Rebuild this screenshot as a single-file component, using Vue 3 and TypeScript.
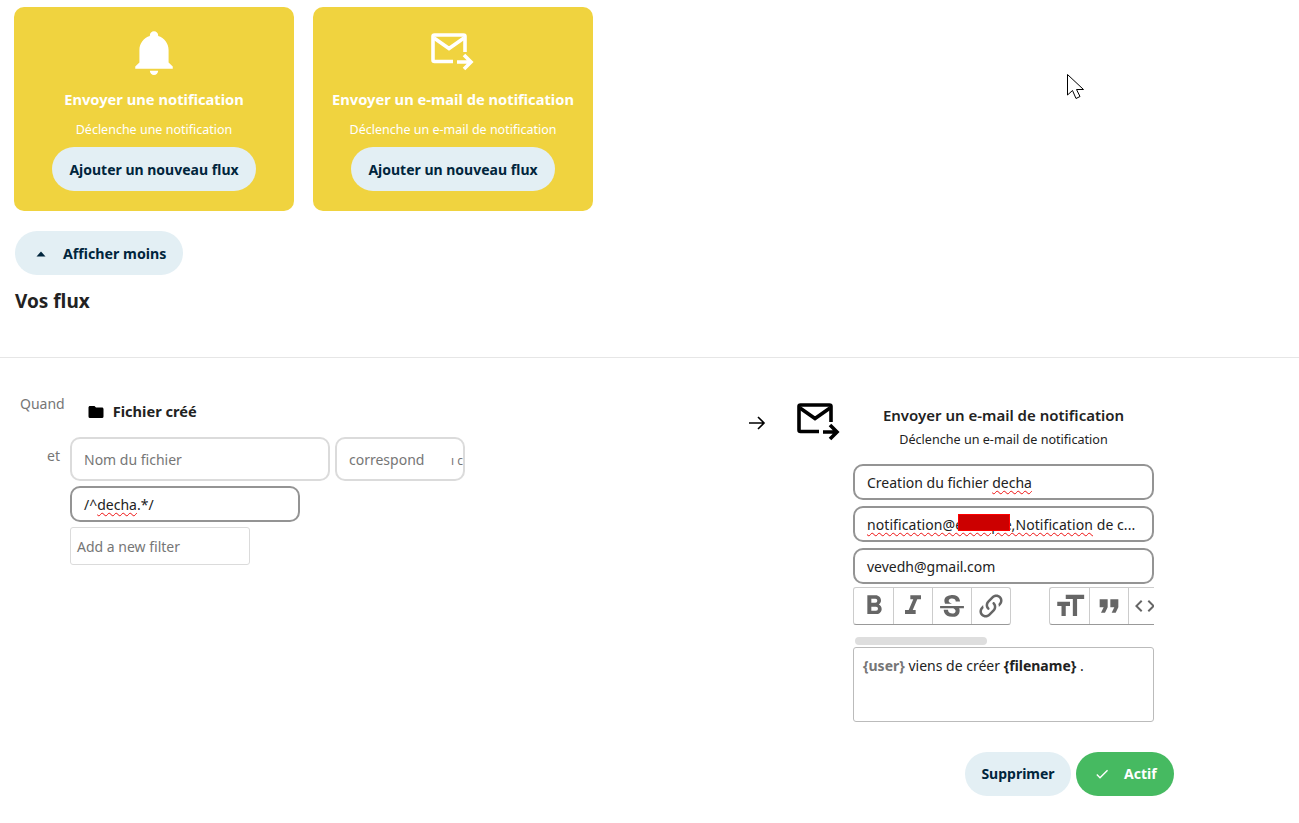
<script setup lang="ts">
interface Op { title: string; desc: string; kind: 'bell' | 'mail' }
interface Tool { d: string; size: number; shift?: number }
const ops: Op[] = [
  { title: 'Envoyer une notification', desc: 'Déclenche une notification', kind: 'bell' },
  { title: 'Envoyer un e-mail de notification', desc: 'Déclenche un e-mail de notification', kind: 'mail' }
]
const bell = 'M21,19V20H3V19L5,17V11C5,7.9 7.03,5.17 10,4.29C10,4.19 10,4.1 10,4A2,2 0 0,1 12,2A2,2 0 0,1 14,4C14,4.1 14,4.19 14,4.29C16.97,5.17 19,7.9 19,11V17L21,19M14,21A2,2 0 0,1 12,23A2,2 0 0,1 10,21'
const tools1: Tool[] = [
  { d: 'M13.5,15.5H10V12.5H13.5A1.5,1.5 0 0,1 15,14A1.5,1.5 0 0,1 13.5,15.5M10,6.5H13A1.5,1.5 0 0,1 14.5,8A1.5,1.5 0 0,1 13,9.5H10M15.6,10.79C16.57,10.11 17.25,9 17.25,8C17.25,5.74 15.5,4 13.25,4H7V18H14.04C16.14,18 17.75,16.3 17.75,14.21C17.75,12.69 16.89,11.39 15.6,10.79Z', size: 32 },
  { d: 'M10,4V7H12.21L8.79,15H6V18H14V15H11.79L15.21,7H18V4H10Z', size: 32 },
  { d: 'M23,12V14H18.61C19.61,16.14 19.56,22 12.38,22C4.05,22.05 4.37,15.5 4.37,15.5L8.34,15.55C8.37,18.92 11.5,18.92 12.12,18.88C12.76,18.83 15.15,18.84 15.34,16.5C15.42,15.41 14.32,14.58 13.12,14H1V12H23M19.41,7.89L15.43,7.86C15.43,7.86 15.6,5.09 12.15,5.08C8.7,5.06 9,7.28 9,7.56C9.04,7.84 9.34,9.22 12,9.88H5.71C5.71,9.88 2.22,3 10.74,2C19.45,1 19.41,7.89 19.41,7.89Z', size: 26 },
  { d: 'M10.59,13.41C11,13.8 11,14.44 10.59,14.83C10.2,15.22 9.56,15.22 9.17,14.83C7.22,12.88 7.22,9.71 9.17,7.76V7.76L12.71,4.22C14.66,2.27 17.83,2.27 19.78,4.22C21.73,6.17 21.73,9.34 19.78,11.29L18.29,12.78C18.3,11.96 18.17,11.14 17.89,10.36L18.36,9.88C19.54,8.71 19.54,6.81 18.36,5.64C17.19,4.46 15.29,4.46 14.12,5.64L10.59,9.17C9.41,10.34 9.41,12.24 10.59,13.41M13.41,9.17C13.8,8.78 14.44,8.78 14.83,9.17C16.78,11.12 16.78,14.29 14.83,16.24V16.24L11.29,19.78C9.34,21.73 6.17,21.73 4.22,19.78C2.27,17.83 2.27,14.66 4.22,12.71L5.71,11.22C5.7,12.04 5.83,12.86 6.11,13.65L5.64,14.12C4.46,15.29 4.46,17.19 5.64,18.36C6.81,19.54 8.71,19.54 9.88,18.36L13.41,14.83C14.59,13.66 14.59,11.76 13.41,10.59C13,10.2 13,9.56 13.41,9.17Z', size: 30 }
]
const tools2: Tool[] = [
  { d: 'M3,12H6V19H9V12H12V9H3M9,4V7H14V19H17V7H22V4H9Z', size: 34 },
  { d: 'M14,17H17L19,13V7H13V13H16M6,17H9L11,13V7H5V13H8L6,17Z', size: 32 },
  { d: 'M14.6,16.6L19.2,12L14.6,7.4L16,6L22,12L16,18L14.6,16.6M9.4,16.6L4.8,12L9.4,7.4L8,6L2,12L8,18L9.4,16.6Z', size: 24, shift: -6 }
]
</script>

<template>
  <div class="page">
    <section class="cards">
      <article v-for="op in ops" :key="op.title" class="card">
        <svg v-if="op.kind === 'bell'" class="bell" viewBox="0 0 24 24"><path :d="bell" fill="#fff" /></svg>
        <svg v-else class="mail-card" viewBox="0 0 44 40">
          <g fill="none" stroke="#fff" stroke-width="3.6">
            <path d="M22 28.5 H3.5 Q2 28.5 2 27 V3.5 Q2 2 3.5 2 H32.5 Q34 2 34 3.5 V19" />
            <path d="M3 5 L18 15.5 L33 5" />
            <path d="M26 29 H39 M33 22 L40 29 L33 36" />
          </g>
        </svg>
        <h3 class="card-title">{{ op.title }}</h3>
        <p class="card-desc">{{ op.desc }}</p>
        <button class="pill">Ajouter un nouveau flux</button>
      </article>
    </section>

    <button class="pill less">
      <svg class="caret" viewBox="0 0 10 6"><path d="M5 0.5 L9.5 5.5 H0.5 Z" fill="#00253c" /></svg>
      Afficher moins
    </button>
    <h2 class="heading">Vos flux</h2>
    <hr class="rule" />

    <section class="flow">
      <div class="trigger">
        <div class="when">
          <span class="label quand">Quand</span>
          <svg class="folder" viewBox="0 0 24 24"><path d="M10,4H4C2.89,4 2,4.89 2,6V18A2,2 0 0,0 4,20H20A2,2 0 0,0 22,18V8C22,6.89 21.1,6 20,6H12L10,4Z" fill="#000" /></svg>
          <strong class="event">Fichier créé</strong>
        </div>
        <div class="filter">
          <span class="label et">et</span>
          <div class="filter-fields">
            <div class="field-row">
              <div class="field soft name">Nom du fichier</div>
              <div class="field soft op">correspond<span class="op-cut">ı c</span></div>
            </div>
            <div class="field value"><span>/^<u class="typo">decha</u>.*/</span></div>
            <div class="add">Add a new filter</div>
          </div>
        </div>
      </div>

      <svg class="to" viewBox="0 0 18 18"><path d="M1 9 H16 M10 3 L16 9 L10 15" fill="none" stroke="#000" stroke-width="1.6" /></svg>
      <svg class="op-icon" viewBox="0 0 44 40">
        <g fill="none" stroke="#000" stroke-width="3.6">
          <path d="M22 28.5 H3.5 Q2 28.5 2 27 V3.5 Q2 2 3.5 2 H32.5 Q34 2 34 3.5 V19" />
          <path d="M3 5 L18 15.5 L33 5" />
          <path d="M26 29 H39 M33 22 L40 29 L33 36" />
        </g>
      </svg>

      <div class="action">
        <h3 class="action-title">Envoyer un e-mail de notification</h3>
        <p class="action-desc">Déclenche un e-mail de notification</p>
        <div class="field dark">Creation du fichier <u class="typo">decha</u></div>
        <div class="field dark sender">
          <span class="sender-text"><u class="typo">notification@exemple,Notification</u> de c...</span>
          <i class="redact"></i>
        </div>
        <div class="field dark">vevedh@gmail.com</div>
        <div class="toolbar">
          <div class="group">
            <span v-for="t in tools1" :key="t.d" class="tool"><svg viewBox="0 0 24 24" :style="{ width: t.size + 'px', height: t.size + 'px' }"><path :d="t.d" fill="#666" /></svg></span>
          </div>
          <div class="group second">
            <span v-for="t in tools2" :key="t.d" class="tool"><svg viewBox="0 0 24 24" :style="{ width: t.size + 'px', height: t.size + 'px', marginLeft: (t.shift ?? 0) + 'px' }"><path :d="t.d" fill="#666" /></svg></span>
          </div>
        </div>
        <div class="scroll"><div class="thumb"></div></div>
        <div class="editor"><b class="grey">{user}</b> viens de créer <b>{filename}</b> .</div>
        <div class="actions">
          <button class="pill del">Supprimer</button>
          <button class="pill active">
            <svg class="check" viewBox="0 0 24 24"><path d="M21,7L9,19L3.5,13.5L4.91,12.09L9,16.17L19.59,5.59L21,7Z" fill="#fff" /></svg>
            Actif
          </button>
        </div>
      </div>
    </section>

    <svg class="cursor" width="20" height="29" viewBox="0 0 20 29">
      <path d="M1.5 1.5 V22 L6.5 17.5 L10 25.5 L14 23.5 L10.5 16.5 L17.5 16.5 Z" fill="#fff" stroke="#000" stroke-width="1" />
    </svg>
  </div>
</template>

<style scoped>
.page {
  position: relative;
  height: 823px;
  overflow: hidden;
  font-family: "Noto Sans", "Open Sans", sans-serif;
  font-size: 14px;
  color: #222;
  background: #fff;
}
.cards {
  display: flex;
  gap: 19px;
  padding: 7px 0 0 14px;
}
.card {
  width: 280px;
  height: 204px;
  box-sizing: border-box;
  background: #f0d33f;
  border-radius: 10px;
  color: #fff;
  display: flex;
  flex-direction: column;
  align-items: center;
  padding-top: 18px;
}
.bell {
  width: 50px;
  height: 50px;
  margin-top: 2px;
  margin-bottom: -2px;
  display: block;
}
.mail-card {
  width: 44px;
  height: 40px;
  margin-top: 8px;
  margin-bottom: 2px;
  display: block;
}
.card-title {
  margin: 12px 0 0;
  font-size: 14.7px;
  line-height: 24px;
  font-weight: 700;
}
.card-desc {
  margin: 10px 0 0;
  font-size: 12.5px;
  line-height: 18px;
}
.pill {
  border: 0;
  height: 44px;
  border-radius: 22px;
  background: #e3eff4;
  color: #00253c;
  font: 700 14px/20px "Noto Sans", "Open Sans", sans-serif;
  padding: 0 16px;
  display: inline-flex;
  align-items: center;
}
.card .pill {
  width: 204px;
  justify-content: center;
  margin-top: 8px;
  padding: 2px 0 0;
}
.less {
  margin: 20px 0 0 15px;
  width: 168px;
  padding: 2px 0 0 21px;
  font-size: 14.2px;
}
.caret {
  width: 10px;
  height: 6px;
  margin-right: 17px;
}
.heading {
  margin: 12px 0 0 15px;
  font-size: 19px;
  line-height: 28px;
  font-weight: 700;
}
.rule {
  margin: 42px 0 0;
  border: 0;
  border-top: 1px solid #e6e6e6;
}
.flow {
  display: flex;
  align-items: flex-start;
}
.trigger {
  width: 748px;
  flex: none;
  padding-left: 20px;
  box-sizing: border-box;
}
.label {
  color: #767676;
}
.when {
  display: flex;
  align-items: flex-start;
  height: 79px;
}
.quand {
  margin-top: 36px;
  line-height: 20px;
}
.folder {
  width: 18px;
  height: 18px;
  margin: 45px 0 0 22px;
}
.event {
  margin: 43px 0 0 8px;
  font-size: 14.6px;
  line-height: 20px;
  color: #222;
}
.filter {
  display: flex;
  padding-left: 27px;
}
.et {
  width: 23px;
  line-height: 20px;
  padding-top: 9px;
}
.filter-fields {
  display: flex;
  flex-direction: column;
}
.field-row {
  display: flex;
  gap: 5px;
}
.field {
  box-sizing: border-box;
  border: 2px solid #949494;
  border-radius: 10px;
  padding: 0 12px;
  display: flex;
  align-items: center;
  color: #222;
}
.soft {
  border-color: #dbdbdb;
  height: 44px;
  color: #767676;
}
.name {
  width: 260px;
}
.op {
  width: 130px;
  position: relative;
  overflow: hidden;
  white-space: nowrap;
}
.op-cut {
  position: absolute;
  right: 0;
  font-size: 12px;
  top: 13px;
}
.value {
  width: 230px;
  height: 36px;
  margin-top: 5px;
  padding-top: 1px;
}
.add {
  box-sizing: border-box;
  width: 180px;
  height: 38px;
  margin-top: 5px;
  border: 1px solid #dbdbdb;
  border-radius: 3px;
  padding: 0 6px;
  line-height: 38px;
  color: #767676;
}
.typo {
  text-decoration: underline wavy #e11;
  text-decoration-thickness: 1px;
  text-underline-offset: 2px;
}
.to {
  flex: none;
  width: 18px;
  height: 18px;
  margin-top: 56px;
}
.op-icon {
  flex: none;
  width: 44px;
  height: 40px;
  margin: 45px 0 0 31px;
}
.action {
  width: 301px;
  margin-left: 12px;
  padding-top: 47px;
  text-align: center;
  position: relative;
}
.action-title {
  margin: 0;
  font-size: 15px;
  line-height: 20px;
  font-weight: 600;
}
.action-desc {
  margin: 5px 0 0;
  font-size: 12.6px;
  line-height: 20px;
}
.dark {
  height: 36px;
  margin-top: 6px;
  text-align: left;
  display: block;
  line-height: 34px;
  white-space: nowrap;
}
.action-desc + .dark {
  margin-top: 14px;
}
.sender {
  position: relative;
}
.sender-text {
  letter-spacing: 0.08px;
}
.redact {
  position: absolute;
  left: 103px;
  top: 6px;
  width: 52px;
  height: 17px;
  background: #cc0000;
  border: 1px solid #f00;
  box-sizing: border-box;
}
.toolbar {
  display: flex;
  gap: 38px;
  margin-top: 3px;
  width: 301px;
  overflow: hidden;
}
.group {
  display: flex;
  flex: none;
  height: 38px;
  box-sizing: border-box;
  border: 1px solid #ccc;
  border-bottom-color: #999;
  border-radius: 3px;
}
.second {
  border-right: 0;
}
.tool {
  width: 39px;
  box-sizing: border-box;
  border-left: 1px solid #ccc;
  display: flex;
  align-items: center;
  justify-content: center;
  flex: none;
  overflow: hidden;
}
.tool:first-child {
  border-left: 0;
}
.tool svg {
  flex: none;
}
.scroll {
  height: 8px;
  margin-top: 12px;
  padding-left: 2px;
}
.thumb {
  width: 132px;
  height: 8px;
  border-radius: 4px;
  background: #dedede;
}
.editor {
  box-sizing: border-box;
  height: 75px;
  margin-top: 2px;
  border: 1px solid #bbb;
  border-radius: 3px;
  padding: 8px 9px;
  text-align: left;
  line-height: 20px;
}
.grey {
  color: #767676;
}
.actions {
  display: flex;
  gap: 5px;
  margin-top: 30px;
  padding-left: 112px;
  width: 209px;
}
.del {
  flex: none;
  width: 106px;
  justify-content: center;
  padding: 0;
}
.active {
  flex: none;
  width: 98px;
  background: #46ba61;
  color: #fff;
  padding: 0 0 0 18px;
  box-sizing: border-box;
}
.check {
  width: 16px;
  height: 16px;
  margin-right: 14px;
}
.cursor {
  position: absolute;
  left: 1066px;
  top: 73px;
}
</style>
